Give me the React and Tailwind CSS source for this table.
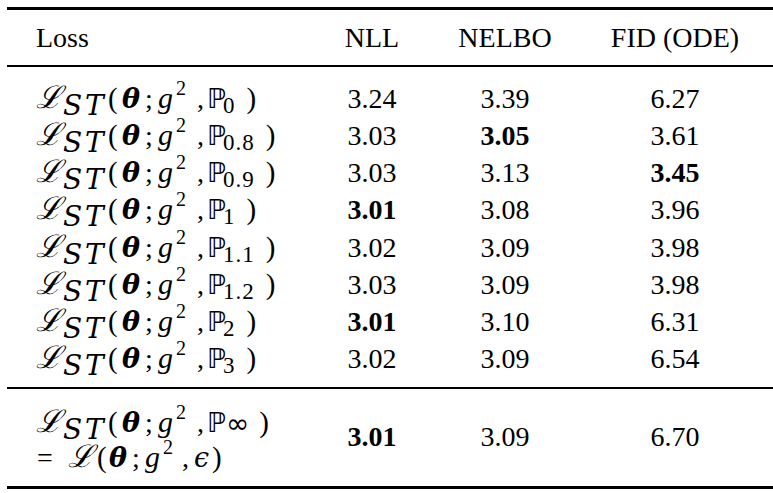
import React from 'react';

const rows = [
  { sub: '0', nll: '3.24', nelbo: '3.39', fid: '6.27' },
  { sub: '0.8', nll: '3.03', nelbo: '3.05', fid: '3.61', bNelbo: true },
  { sub: '0.9', nll: '3.03', nelbo: '3.13', fid: '3.45', bFid: true },
  { sub: '1', nll: '3.01', nelbo: '3.08', fid: '3.96', bNll: true },
  { sub: '1.1', nll: '3.02', nelbo: '3.09', fid: '3.98' },
  { sub: '1.2', nll: '3.03', nelbo: '3.09', fid: '3.98' },
  { sub: '2', nll: '3.01', nelbo: '3.10', fid: '6.31', bNll: true },
  { sub: '3', nll: '3.02', nelbo: '3.09', fid: '6.54' },
];

const dv = "font-['DejaVu_Serif',serif]";

const CalL = ({ className = '' }) => (
  <span className={`inline-block leading-none text-[31px] italic ${dv} ${className}`}>ℒ</span>
);

const LossST = ({ sub }) => {
  const inf = sub === '∞';
  return (
    <span className="whitespace-nowrap">
      <CalL className="w-[28px] pl-[1px]" />
      <span className={`relative top-[7px] inline-block w-[22px] leading-none text-[28px] italic ${dv}`}>S</span>
      <span className={`relative top-[7px] inline-block w-[21px] leading-none text-[28px] italic ${dv}`}>T</span>
      <span className="inline-block w-[15px] pl-[2px] leading-none text-[29px]">(</span>
      <span className={`inline-block w-[23px] pl-[1px] leading-none text-[27px] font-bold italic ${dv}`}>θ</span>
      <span className="inline-block w-[10px] pl-[1px] leading-none">;</span>
      <span className="inline-block w-[21px] pl-[4px] leading-none text-[30px] italic">g</span>
      <span className="relative -top-[13px] inline-block w-[18px] pl-[1px] leading-none text-[20px]">2</span>
      <span className="inline-block w-[12px] pl-[4px] leading-none">,</span>
      <span className="inline-block w-[18px] pl-[2px] leading-none text-[27px] font-['DejaVu_Sans',sans-serif]">ℙ</span>
      {inf ? (
        <span className="relative top-[1px] ml-[3px] leading-none text-[28px] font-['DejaVu_Sans',sans-serif]">∞</span>
      ) : (
        <span className="relative top-[5px] leading-none text-[23px] tracking-[1px]">{sub}</span>
      )}
      <span className={`${inf ? 'ml-[10px]' : 'ml-[11px]'} leading-none text-[29px]`}>)</span>
    </span>
  );
};

const LossEq = () => (
  <span className="whitespace-nowrap">
    <span className="inline-block w-[31px] pl-[2px] leading-none">=</span>
    <CalL className="w-[28px] pl-[2px]" />
    <span className="inline-block w-[12px] pl-[3px] leading-none text-[29px]">(</span>
    <span className={`inline-block w-[23px] pl-[3px] leading-none text-[27px] font-bold italic ${dv}`}>θ</span>
    <span className="inline-block w-[11px] pl-[3px] leading-none">;</span>
    <span className="inline-block w-[22px] pl-[5px] leading-none text-[30px] italic">g</span>
    <span className="relative -top-[13px] inline-block w-[18px] pl-[1px] leading-none text-[20px]">2</span>
    <span className="inline-block w-[12px] pl-[2px] leading-none">,</span>
    <span className={`inline-block w-[18px] pl-[2px] leading-none text-[27px] italic ${dv}`}>ϵ</span>
    <span className="ml-[2px] leading-none text-[29px]">)</span>
  </span>
);

const Cell = ({ v, bold }) => (
  <div className={`text-center ${bold ? 'font-bold' : ''}`}>{v}</div>
);

const cols = 'grid grid-cols-[315px_100px_166px_174px_1fr]';

export default function App() {
  return (
    <div className="w-[773px] h-[493px] bg-white text-black pl-[7px] pt-[7px] text-[28px] leading-[37px] font-['Liberation_Serif','Times_New_Roman',serif]">
      <div className="border-t-[3px] border-b-[3px] border-black">
        <div className={`${cols} h-[57px] pt-[9px] border-b-[2px] border-black`}>
          <div className="pl-[29px]">Loss</div>
          <div className="text-center">NLL</div>
          <div className="text-center">NELBO</div>
          <div className="text-center">FID (ODE)</div>
          <div />
        </div>
        <div className="pt-[13px] h-[322px] border-b-[2px] border-black">
          {rows.map((r, i) => (
            <div key={i} className={`${cols} h-[37.15px]`}>
              <div className="pl-[28px]"><LossST sub={r.sub} /></div>
              <Cell v={r.nll} bold={r.bNll} />
              <Cell v={r.nelbo} bold={r.bNelbo} />
              <Cell v={r.fid} bold={r.bFid} />
              <div />
            </div>
          ))}
        </div>
        <div className={`${cols} h-[97px]`}>
          <div className="pl-[28px] pt-[16px] flex flex-col leading-[35px]">
            <LossST sub="∞" />
            <LossEq />
          </div>
          <div className="pt-[29px]"><Cell v="3.01" bold /></div>
          <div className="pt-[29px]"><Cell v="3.09" /></div>
          <div className="pt-[29px]"><Cell v="6.70" /></div>
          <div />
        </div>
      </div>
    </div>
  );
}
